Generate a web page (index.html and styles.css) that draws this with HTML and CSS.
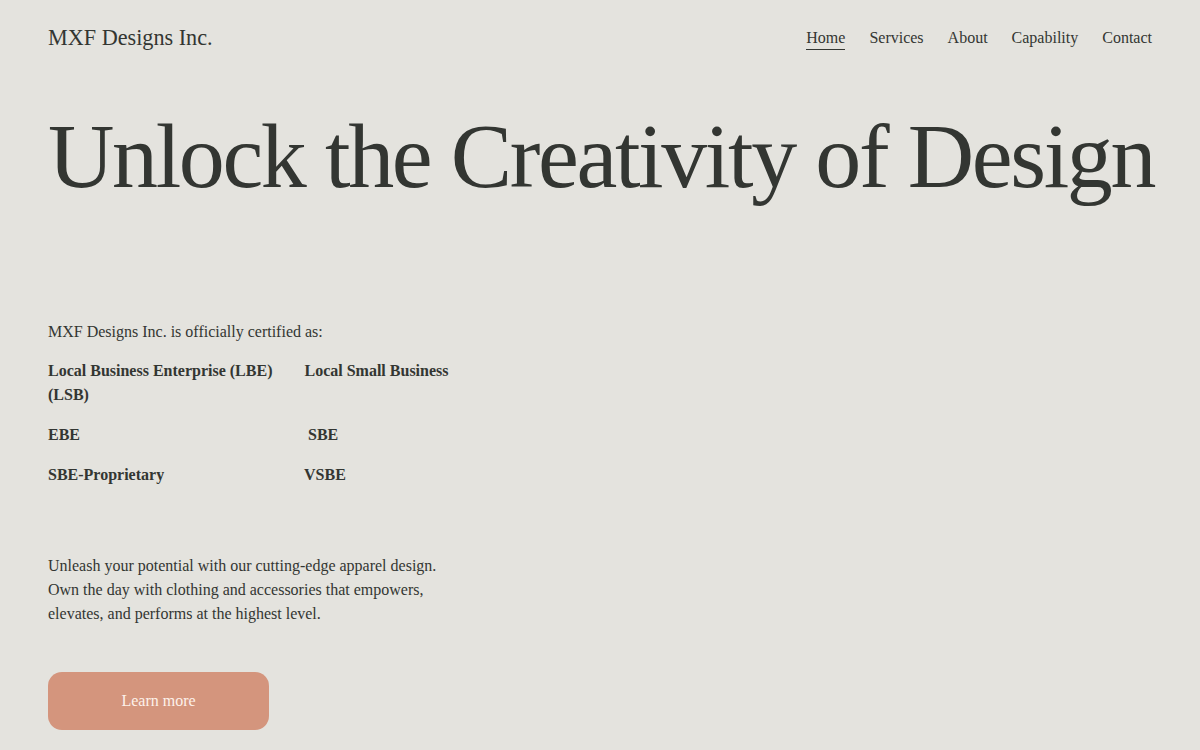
FILE: index.html
```html
<!DOCTYPE html>
<html lang="en">
<head>
<meta charset="utf-8">
<title>MXF Designs Inc.</title>
<link rel="stylesheet" href="styles.css">
</head>
<body>
<header class="site-header">
  <a class="logo" href="#">MXF Designs Inc.</a>
  <nav class="nav">
    <a class="nav-link active" href="#">Home</a>
    <a class="nav-link" href="#">Services</a>
    <a class="nav-link" href="#">About</a>
    <a class="nav-link" href="#">Capability</a>
    <a class="nav-link" href="#">Contact</a>
  </nav>
</header>
<main class="hero">
  <h1 class="hero-title">Unlock the Creativity of Design</h1>
  <section class="certs">
    <p class="certs-intro">MXF Designs Inc. is officially certified as:</p>
    <p class="cert-row"><span class="cert-lead">Local Business Enterprise (LBE)</span><span class="nowrap">Local Small Business</span> <span class="nowrap">(LSB)</span></p>
    <p class="cert-row"><span class="cert-first">EBE</span><span class="cert-shift">SBE</span></p>
    <p class="cert-row"><span class="cert-first">SBE-Proprietary</span>VSBE</p>
  </section>
  <p class="lead">Unleash your potential with our cutting-edge apparel design. Own the day with clothing and accessories that empowers, elevates, and performs at the highest level.</p>
  <a class="btn" href="#">Learn more</a>
</main>
</body>
</html>
```

FILE: styles.css
```css
html, body {
  margin: 0;
  padding: 0;
}
body {
  background: #e4e3de;
  color: #333632;
  font-family: "Liberation Serif", "Times New Roman", serif;
  font-size: 16px;
  line-height: 24px;
}
a {
  color: inherit;
  text-decoration: none;
}
.site-header {
  display: flex;
  justify-content: space-between;
  align-items: center;
  padding: 22px 48px 0;
  height: 32px;
}
.logo {
  font-size: 22.2px;
  line-height: 32px;
}
.nav {
  display: flex;
  gap: 24px;
  padding-top: 0;
}
.nav-link {
  font-size: 16px;
  line-height: 23px;
  border-bottom: 1px solid transparent;
}
.nav-link.active {
  border-bottom-color: #333632;
}
.hero {
  padding: 0 48px;
}
.hero-title {
  margin: 47px 0 0;
  font-weight: 400;
  font-size: 92px;
  line-height: 110px;
  letter-spacing: -2.4px;
  white-space: nowrap;
}
.certs {
  margin-top: 109px;
}
.certs-intro {
  margin: 0 0 15px;
}
.cert-row {
  width: 410px;
  margin: 0 0 16px;
  font-weight: 700;
}
.cert-row:last-child {
  margin-bottom: 0;
}
.cert-lead {
  margin-right: 32px;
}
.nowrap {
  white-space: nowrap;
}
.cert-first {
  display: inline-block;
  width: 256px;
}
.cert-shift {
  padding-left: 4px;
}
.lead {
  width: 400px;
  margin: 67px 0 0;
}
.btn {
  display: flex;
  align-items: center;
  justify-content: center;
  width: 221px;
  height: 58px;
  margin-top: 46px;
  border-radius: 14px;
  background: #d4957d;
  color: #fdf1ea;
}
```
